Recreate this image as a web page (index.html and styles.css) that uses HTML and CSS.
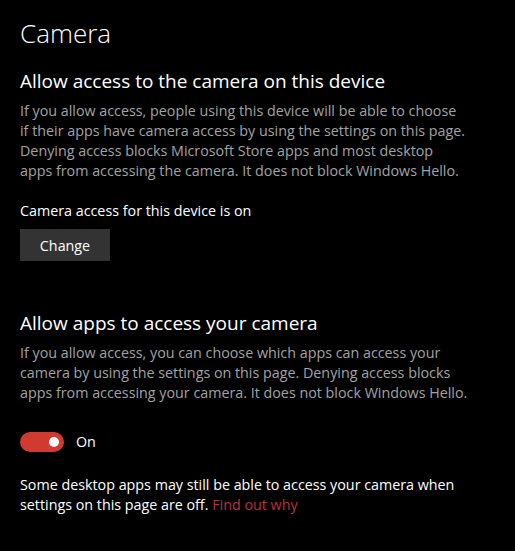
FILE: index.html
```html
<!DOCTYPE html>
<html>
<head>
<meta charset="utf-8">
<link rel="stylesheet" href="styles.css">
</head>
<body>
<main class="page">
  <h1 class="title">Camera</h1>
  <section class="section">
    <h2 class="heading">Allow access to the camera on this device</h2>
    <p class="desc">If you allow access, people using this device will be able to choose<br>if their apps have camera access by using the settings on this page.<br>Denying access blocks Microsoft Store apps and most desktop<br>apps from accessing the camera. It does not block Windows Hello.</p>
    <p class="status">Camera access for this device is on</p>
    <button class="btn">Change</button>
  </section>
  <section class="section second">
    <h2 class="heading">Allow apps to access your camera</h2>
    <p class="desc">If you allow access, you can choose which apps can access your<br>camera by using the settings on this page. Denying access blocks<br>apps from accessing your camera. It does not block Windows Hello.</p>
    <div class="toggle-row">
      <span class="toggle"><span class="knob"></span></span>
      <span class="toggle-label">On</span>
    </div>
    <p class="note">Some desktop apps may still be able to access your camera when<br>settings on this page are off. <a class="link" href="#">Find out why</a></p>
  </section>
</main>
</body>
</html>
```
FILE: styles.css
```css
html, body {
  margin: 0;
  padding: 0;
  background: #000;
}
body {
  font-family: "Open Sans", "Noto Sans", sans-serif;
  color: #fff;
  width: 515px;
  height: 551px;
  overflow: hidden;
}
.page {
  padding: 15px 0 0 20px;
}
.title {
  margin: 0;
  font-size: 26px;
  font-weight: 300;
  line-height: 36px;
}
.section {
  display: flex;
  flex-direction: column;
  align-items: flex-start;
}
.heading {
  margin: 17px 0 0;
  font-size: 19px;
  font-weight: 400;
  line-height: 26px;
}
.second .heading {
  margin-top: 49px;
}
.desc {
  margin: 7px 0 0;
  font-size: 14.3px;
  line-height: 20px;
  color: #a3a3a3;
}
.second .desc {
  margin-top: 6.5px;
}
.status {
  margin: 20px 0 0;
  font-size: 14.3px;
  line-height: 20px;
}
.btn {
  margin-top: 8px;
  width: 90px;
  height: 32px;
  background: #333;
  border: none;
  color: #fff;
  font-family: inherit;
  font-size: 14.3px;
  padding: 0;
}
.toggle-row {
  margin-top: 29.5px;
  display: flex;
  align-items: center;
  gap: 12px;
  height: 20px;
}
.toggle {
  width: 44px;
  height: 20px;
  border-radius: 10px;
  background: #d13a30;
  display: flex;
  align-items: center;
  justify-content: flex-end;
  padding-right: 5px;
  box-sizing: border-box;
}
.knob {
  width: 10px;
  height: 10px;
  border-radius: 50%;
  background: #fff;
}
.toggle-label {
  font-size: 14.3px;
  line-height: 20px;
}
.note {
  margin: 22.5px 0 0;
  font-size: 14.3px;
  line-height: 20px;
}
.link {
  color: #bd3138;
  text-decoration: none;
}
```
